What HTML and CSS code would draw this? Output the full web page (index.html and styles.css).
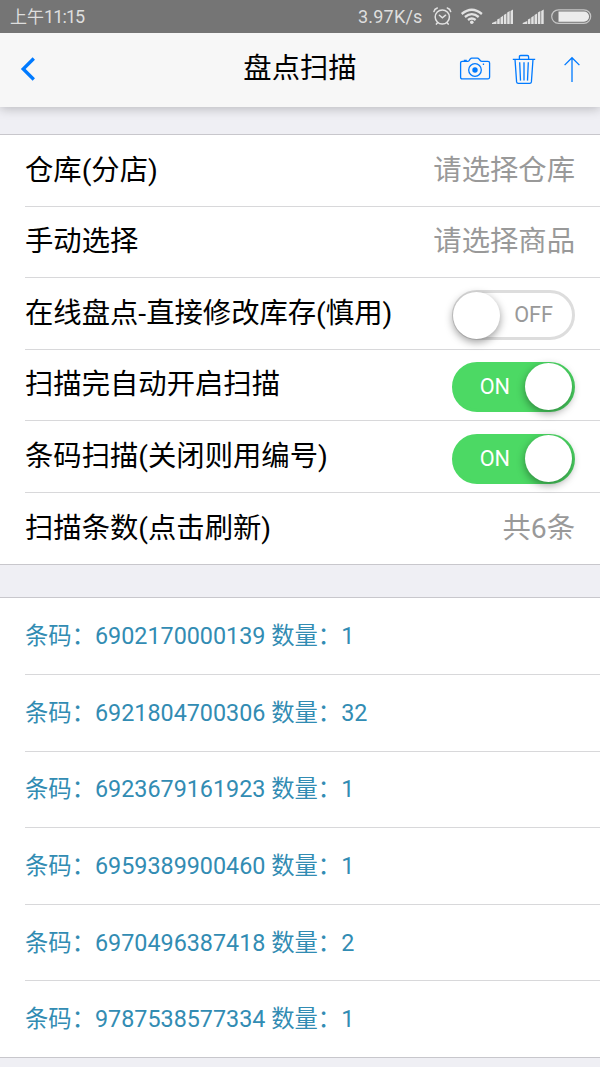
FILE: index.html
```
<!DOCTYPE html>
<html lang="zh-CN">
<head>
<meta charset="utf-8">
<title>盘点扫描</title>
<link rel="stylesheet" href="styles.css">
</head>
<body>
<div class="status">
  <span class="clock">上午<span class="digits">11:15</span></span>
  <span class="speed">3.97K/s</span>
  <svg class="status-icons" width="160" height="33" viewBox="0 0 160 33">
    <g fill="none" stroke="#e2e2e2" stroke-width="1.5" stroke-linecap="round">
      <circle cx="10.300" cy="17" r="7.100"/>
      <path d="M7.400 15.200l3 2.600 3.200-2.600M1.900 11.600q.5-2.600 3.400-3.600M18.700 11.600q-.5-2.600-3.400-3.600M5.800 22.500l-1.400 1.600M14.800 22.500l1.400 1.600"/>
    </g>
    <g fill="none" stroke="#e2e2e2" stroke-width="2.300">
      <path d="M29.700 14q10.100-8.600 20.200 0M32.900 17q6.900-5.800 13.800 0M36 20q3.800-3 7.600 0"/>
    </g>
    <circle cx="39.800" cy="22.200" r="1.800" fill="#e2e2e2"/>
    <g fill="#e2e2e2">
      <path id="signal" d="M60 24v-1l4.500-2V24zM65.200 24v-4.500l2.500-1.300V24zM68.500 24v-6.600l2.500-1.600V24zM71.800 24v-9l2.600-1.600V24zM75.200 24V12.600l2.500-1.500V24zM78.500 24V10.900l2.500-1.300V24z"/>
      <use href="#signal" x="30.700"/>
    </g>
    <rect x="119.700" y="9.800" width="39" height="13.600" rx="6.800" fill="none" stroke="#c6c6c6" stroke-width="1.200"/>
    <path d="M126.500 11.500h25.500a5.100 5.100 0 0 1 0 10.200h-25.500z" fill="#ececec"/>
  </svg>
</div>
<header class="bar">
  <svg class="back" width="20" height="30" viewBox="0 0 20 30"><path d="M15.800 4.500L5.200 15 15.800 25.500" fill="none" stroke="#007aff" stroke-width="3.300"/></svg>
  <h1 class="title">盘点扫描</h1>
  <div class="actions">
    <svg width="32" height="32" viewBox="0 0 32 32" fill="none" stroke="#007aff" stroke-width="1.300" stroke-linejoin="round">
      <path d="M1.600 9q0-1.700 1.700-1.700h5.500q1.200 0 1.900-1.600l.6-.7q.5-.8 1.500-.8h5.600q1 0 1.500.8l1.300 1.500q.6.800 1.700.8h6q1.700 0 1.700 1.700v14.300q0 1.500-1.500 1.500H3.100q-1.500 0-1.500-1.500z"/>
      <circle cx="16" cy="16" r="6.300"/><circle cx="16" cy="16" r="2.700" fill="#007aff" stroke="none"/>
      <path d="M4.800 6.400h3M23.800 10.300h1.300" stroke-width="1.500"/>
    </svg>
    <svg class="trash" width="24" height="32" viewBox="0 0 24 32" fill="none" stroke="#007aff" stroke-width="1.300">
      <path d="M.8 5.300h22.400M3 5.300l1.600 22.600q.2 1.500 1.700 1.500h11.400q1.500 0 1.700-1.500l1.600-22.600M7.400 5.300V2.700q0-1.200 1.200-1.200h6.800q1.200 0 1.200 1.200v2.600M7.700 8.300l.8 18.300M12 8.300V26.600M16.300 8.300L15.500 26.600"/>
    </svg>
    <svg width="18" height="32" viewBox="0 0 18 32" fill="none" stroke="#007aff" stroke-width="1.300"><path d="M9 28V3.500M1.600 11.100L9 3.700l7.400 7.400"/></svg>
  </div>
</header>
<main>
  <ul class="list settings">
    <li class="row"><span>仓库(分店)</span><span class="value">请选择仓库</span></li>
    <li class="row"><span>手动选择</span><span class="value">请选择商品</span></li>
    <li class="row"><span>在线盘点-直接修改库存(慎用)</span><span class="switch"><i class="knob"></i><span class="state">OFF</span></span></li>
    <li class="row"><span>扫描完自动开启扫描</span><span class="switch on"><span class="state">ON</span><i class="knob"></i></span></li>
    <li class="row"><span>条码扫描(关闭则用编号)</span><span class="switch on"><span class="state">ON</span><i class="knob"></i></span></li>
    <li class="row"><span>扫描条数(点击刷新)</span><span class="value">共6条</span></li>
  </ul>
  <ul class="list codes">
    <li class="row">条码：6902170000139 数量：1</li>
    <li class="row">条码：6921804700306 数量：32</li>
    <li class="row">条码：6923679161923 数量：1</li>
    <li class="row">条码：6959389900460 数量：1</li>
    <li class="row">条码：6970496387418 数量：2</li>
    <li class="row">条码：9787538577334 数量：1</li>
  </ul>
</main>
</body>
</html>
```
FILE: styles.css
```
* { box-sizing: border-box; }
body {
  margin: 0;
  height: 1067px;
  overflow: hidden;
  background: #efeff4;
  color: #000;
  font-family: Roboto, "Noto Sans CJK SC", sans-serif;
  font-size: 28.333px;
}
.status {
  position: relative;
  z-index: 2;
  display: flex;
  align-items: center;
  height: 33px;
  padding-left: 10px;
  background: #757575;
  color: #dedede;
  font-size: 18px;
  line-height: 33px;
}
.clock { width: 348px; font-size: 17px; }
.digits { font-size: 18px; letter-spacing: -0.9px; }
.speed { width: 74px; letter-spacing: 0.2px; }
.status-icons { flex: none; }
.bar {
  position: relative;
  display: grid;
  grid-template-columns: 150px 1fr 150px;
  align-items: center;
  height: 74px;
  padding-bottom: 2px;
  background: #f7f7f7;
  box-shadow: 0 2px 10px rgba(0, 0, 0, .22);
}
.back { margin-left: 18px; }
.title {
  margin: 0;
  font-size: 28.333px;
  font-weight: 400;
  line-height: 40px;
  text-align: center;
}
.actions {
  display: flex;
  justify-content: space-between;
  padding: 1px 19px 0 9px;
}
.trash { margin-right: 7px; }
.list {
  margin: 0;
  padding: 0;
  list-style: none;
  background: #fff;
  border-top: 1px solid #c8c7cc;
  border-bottom: 1px solid #c8c7cc;
}
.settings { margin-top: 27px; }
.codes { margin-top: 32.400px; color: #328cb3; font-size: 23.333px; }
.row {
  display: flex;
  align-items: center;
  justify-content: space-between;
  height: 71.667px;
  margin-left: 25px;
  padding: 0 25px 6.500px 0;
  border-bottom: 1px solid #d8d8da;
  white-space: pre;
}
.settings .row:first-child { height: 71.500px; }
.codes .row { height: 76.667px; padding-bottom: 4px; }
.list .row:last-child { border-bottom: 0; height: 70.700px; }
.codes .row:last-child { height: 75.667px; }
.value { color: #999; }
.switch {
  display: flex;
  align-items: center;
  justify-content: space-between;
  width: 123.333px;
  height: 50px;
  margin-top: 10px;
  padding: 0 18px 0 0;
  border: 3.333px solid #ddd;
  border-radius: 25px;
  color: #999;
  font-size: 21.667px;
  line-height: 44px;
}
.knob {
  flex: none;
  width: 47px;
  height: 47px;
  margin-left: -2px;
  border-radius: 50%;
  background: #fff;
  box-shadow: 0 3px 8px rgba(0, 0, 0, .4);
}
.switch .state { margin-right: 1px; }
.switch.on {
  padding: 0 0 0 25px;
  background: #4cd964;
  border-color: #4cd964;
  color: #fff;
}
.on .knob { margin: 0; }
```
